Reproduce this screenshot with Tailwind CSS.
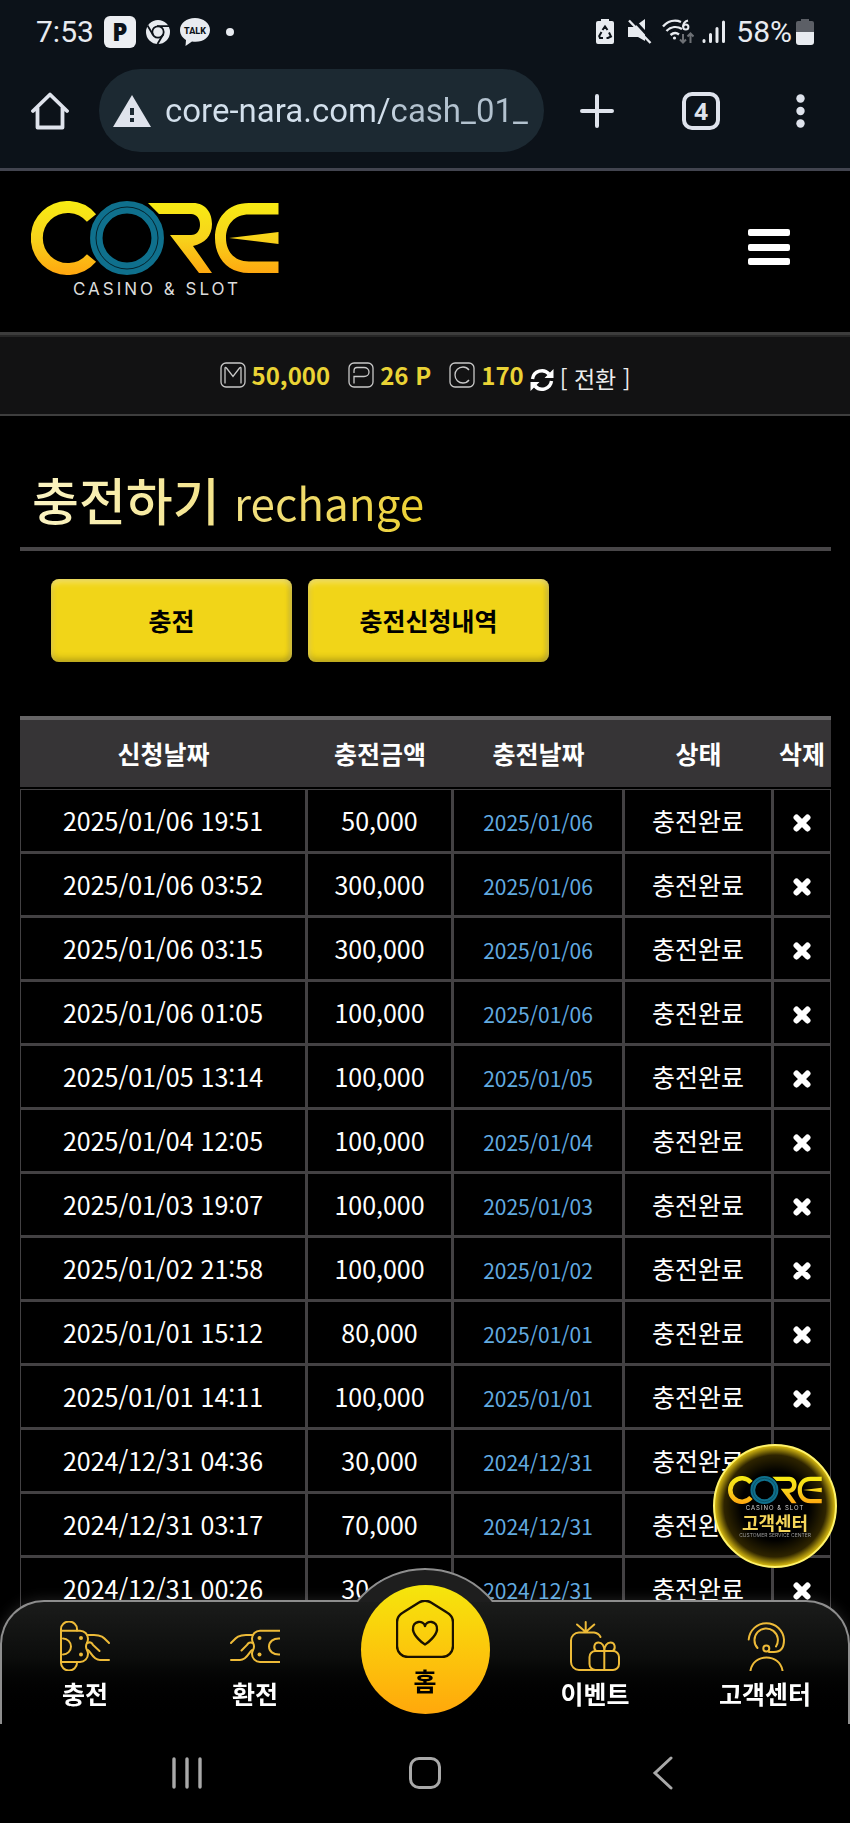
<!DOCTYPE html>
<html lang="ko">
<head>
    <meta charset="UTF-8">
    <meta name="viewport" content="width=device-width, initial-scale=1.0">
    <title>CORE CASINO &amp; SLOT</title>
    <script src="https://cdn.jsdelivr.net/npm/@tailwindcss/browser@4"></script>
</head>
<body class="min-h-screen bg-black text-white font-['Noto_Sans_CJK_KR',sans-serif]">

    <!-- Shared logo -->
    <svg class="absolute size-0" aria-hidden="true">
        <defs>
            <linearGradient id="gold" gradientUnits="userSpaceOnUse" x1="0" y1="0" x2="0" y2="74">
                <stop offset="0" stop-color="#f7ec13"/>
                <stop offset="0.5" stop-color="#f7d31b"/>
                <stop offset="1" stop-color="#ffa60f"/>
            </linearGradient>
            <symbol id="logo" viewBox="0 0 248 74">
                <path d="M60.5 17A31 31 0 1 0 60.5 57" fill="none" stroke="url(#gold)" stroke-width="12"/>
                <circle cx="96" cy="37" r="38" fill="#000"/>
                <circle cx="96" cy="37" r="30.7" fill="none" stroke="#0f708d" stroke-width="12.5"/>
                <circle cx="96" cy="37" r="31" fill="none" stroke="#04222c" stroke-width="1"/>
                <path fill="url(#gold)" d="M117 2H162C175 2 181 12 181 23C181 35 174 42 162 45L181 72H168L139 34H160C166 34 169 29 169 24C169 18 166 13 160 13H128Z"/>
                <path fill="url(#gold)" d="M247.500 2H218C196 2 184 18 184 37C184 56 196 72 218 72H247.500V60.500H218C203 60.500 195 50 195 37C195 24 203 13.500 218 13.500H247.500Z"/>
                <path fill="url(#gold)" d="M198 37L247.500 31V43Z"/>
            </symbol>
        </defs>
    </svg>

    <!-- Phone status bar -->
    <div class="flex h-16 items-center justify-between bg-[#0c1219] pl-9 pr-9 font-[Roboto,sans-serif] text-[30px] leading-8 text-[#e8ebf0]">
        <div class="flex items-center">
            <span>7:53</span>
            <span class="ml-2.5 flex size-8 items-center justify-center rounded-md bg-[#eceef2] font-['Open_Sans',sans-serif] text-2xl font-extrabold text-[#0c1219]">P</span>
            <svg class="ml-2.5 size-6" viewBox="0 0 24 24">
                <circle cx="12" cy="12" r="12" fill="#e8ebf0"/>
                <circle cx="12" cy="12" r="5.700" fill="none" stroke="#0c1219" stroke-width="1.800"/>
                <path d="M11 6.200H23M7 14.800L1.500 5.500M17 14.800L11.500 24" fill="none" stroke="#0c1219" stroke-width="1.800"/>
            </svg>
            <svg class="ml-2.5 h-7 w-[30px]" viewBox="0 0 30 28">
                <path d="M15 0C6.500 0 0 5 0 12C0 17 3 20 6 22L5.500 28L12 23.500C22 25 30 20 30 12C30 5 23.500 0 15 0Z" fill="#e8ebf0"/>
                <text x="15" y="16" text-anchor="middle" font-family="Roboto" font-weight="800" font-size="9" fill="#0c1219">TALK</text>
            </svg>
            <span class="ml-4 size-2 rounded-full bg-[#e8ebf0]"></span>
        </div>
        <div class="flex items-center">
            <svg class="h-[26px] w-[18px]" viewBox="0 0 18 26">
                <path d="M5 0H13V2H16A2 2 0 0 1 18 4V23A2 2 0 0 1 16 25H2A2 2 0 0 1 0 23V4A2 2 0 0 1 2 2H5Z" fill="#e8ebf0"/>
                <path d="M6.500 11L9 7.500L11.500 11M13 13.500L15 17.500L12 19H10.500M7 19H4L3.200 17L5.500 13" fill="none" stroke="#0c1219" stroke-width="2"/>
            </svg>
            <svg class="ml-3.5 h-[26px] w-6" viewBox="0 0 24 26">
                <path d="M0 8H6L17 0V22L10 18H0Z" fill="#e8ebf0"/>
                <path d="M3 -2L24 21" stroke="#0c1219" stroke-width="3"/>
                <path d="M1 1.500L22.500 24" stroke="#e8ebf0" stroke-width="2.400"/>
            </svg>
            <svg class="ml-2.5 h-[26px] w-8" viewBox="0 0 32 26" fill="none" stroke="#e8ebf0" stroke-width="2.400">
                <path d="M1 7.500C6 2 13 .500 19 3M4.500 12C9 7.500 15 7 20 10M8.500 16C11.500 13.500 14.500 13.500 17 15.500"/>
                <circle cx="12.500" cy="19" r="1.600" fill="#e8ebf0" stroke="none"/>
                <path d="M26 1.500C22.500 2.500 21 5 21 8" stroke-width="2"/>
                <circle cx="23.800" cy="8" r="2.600" stroke-width="2"/>
                <path d="M21 15V23M18 20.500L21 23.500L24 20.500M28.500 24V15M25.500 17.500L28.500 14.500L31.500 17.500" stroke="#6d7075" stroke-width="2"/>
            </svg>
            <svg class="ml-2 h-[26px] w-6" viewBox="0 0 24 26" stroke="#e8ebf0" stroke-width="3" stroke-linecap="round">
                <path d="M2 21.500V22.500M8.500 15.500V22.500M15 9.500V22.500M21.500 3V22.500"/>
            </svg>
            <span class="ml-2.5">58%</span>
            <svg class="ml-1 h-[26px] w-[18px]" viewBox="0 0 18 26">
                <path d="M5 0H13V2H16A2 2 0 0 1 18 4V13H0V4A2 2 0 0 1 2 2H5Z" fill="#5c5f66"/>
                <path d="M0 13H18V23A3 3 0 0 1 15 26H3A3 3 0 0 1 0 23Z" fill="#e8ebf0"/>
            </svg>
        </div>
    </div>

    <!-- Browser toolbar -->
    <div class="flex h-[107px] items-start border-b-3 border-[#42444f] bg-[#0c1219] pl-[31px] pr-9 pt-[5px] text-[#dfe3ec]">
        <button aria-label="Home" class="mt-[23px] shrink-0">
            <svg class="size-[38px]" viewBox="0 0 38 38" fill="none" stroke="currentColor" stroke-width="3.800" stroke-linejoin="round" stroke-linecap="round">
                <path d="M2 19L19 2.500L36 19M6.500 16V35.500H31.500V16"/>
            </svg>
        </button>
        <label class="ml-[30px] flex h-[83px] min-w-0 flex-1 items-center rounded-full bg-[#1c2932] pl-3.5 pr-3.5">
            <svg class="h-8 w-[38px] shrink-0" viewBox="0 0 38 32">
                <path d="M19 0L38 32H0Z" fill="#dfe3ec"/>
                <path d="M17 13H21V20H17ZM17 23H21V27H17Z" fill="#1c2932"/>
            </svg>
            <input type="text" aria-label="Address" value="core-nara.com/cash_01_" class="ml-3.5 w-full min-w-0 bg-linear-to-r from-[#d3e0ec] from-60% to-[#b3c2cf] to-65% bg-clip-text font-[Roboto,sans-serif] text-[33px] leading-10 text-transparent outline-none">
        </label>
        <button aria-label="New tab" class="ml-9 mt-[25px] shrink-0">
            <svg class="size-[34px]" viewBox="0 0 34 34" stroke="currentColor" stroke-width="4" stroke-linecap="round"><path d="M2 17H32M17 2V32"/></svg>
        </button>
        <button aria-label="Tabs" class="ml-[68px] mt-[23px] flex size-[38px] shrink-0 items-center justify-center rounded-[10px] border-4 border-current font-['Open_Sans',sans-serif] text-2xl font-bold">4</button>
        <button aria-label="Menu" class="ml-[76px] mt-[25px] shrink-0">
            <svg class="h-[34px] w-[9px]" viewBox="0 0 9 34" fill="currentColor"><circle cx="4.500" cy="4.500" r="4.200"/><circle cx="4.500" cy="17" r="4.200"/><circle cx="4.500" cy="29.500" r="4.200"/></svg>
        </button>
        <span class="w-[9px]"></span>
    </div>

    <!-- Site header -->
    <header class="flex h-[164px] justify-between border-b-3 border-[#3c3c3c] pl-[31px] pr-[60px] pt-[30px]">
        <a href="#" class="block h-[94px] w-[248px]">
            <svg class="h-[74px] w-[248px]"><use href="#logo"/></svg>
            <span class="mt-1 block pl-1 text-center font-[Inter,sans-serif] text-[17px] leading-5 tracking-[3px] text-[#dcdcdc]">CASINO &amp; SLOT</span>
        </a>
        <button aria-label="메뉴" class="mt-7 flex h-9 w-[42px] flex-col justify-between">
            <span class="h-[7px] w-full rounded-xs bg-white"></span>
            <span class="h-[7px] w-full rounded-xs bg-white"></span>
            <span class="h-[7px] w-full rounded-xs bg-white"></span>
        </button>
    </header>

    <!-- Balances -->
    <div class="flex h-[81px] items-center justify-center border-y-2 border-t-[#262626] border-b-[#3e3e3e] bg-[#121213] pb-0.5 text-2xl leading-8 font-bold text-[#ead335]">
        <svg class="mr-1.5 size-[26px]" viewBox="0 0 26 26" fill="none" stroke="#c9c9c9" stroke-width="1.300"><rect x="1" y="1" width="24" height="24" rx="5"/><path d="M5 21.500V6.500Q5 4.500 6.500 6L13 14.500L19.500 6Q21 4.500 21 6.500V21.500"/></svg>
        <span>50,000</span>
        <svg class="mr-1.5 ml-[18px] size-[26px]" viewBox="0 0 26 26" fill="none" stroke="#c9c9c9" stroke-width="1.300"><rect x="1" y="1" width="24" height="24" rx="5"/><path d="M6 21.500V14.500H16A5 4.500 0 0 0 16 5.500H9Q6 5.500 6 9V11"/></svg>
        <span>26 P</span>
        <svg class="mr-1.5 ml-[18px] size-[26px]" viewBox="0 0 26 26" fill="none" stroke="#c9c9c9" stroke-width="1.300"><rect x="1" y="1" width="24" height="24" rx="5"/><path d="M20 8C18.500 6 16.500 5 14 5C9.500 5 6 8.500 6 13S9.500 21 14 21C16.500 21 18.500 20 20 18"/></svg>
        <span>170</span>
        <button class="mt-1.5 ml-1.5 flex items-center gap-1.5 text-[23px] font-normal text-[#ededed]">
            <svg class="mt-1 size-6" viewBox="0 0 24 24" fill="none" stroke="#fff" stroke-width="3.400"><path d="M2.500 11A9.500 9.500 0 0 1 19 6M21.500 13A9.500 9.500 0 0 1 5 18"/><path d="M23.500 1V10H14.500ZM.500 23V14H9.500Z" fill="#fff" stroke="none"/></svg>
            [ 전환 ]
        </button>
    </div>

    <main class="px-5 pt-12 pr-[19px]">
        <h1 class="h-[87px] border-b-4 border-[#484648] pl-3 leading-[70px]">
            <span class="bg-linear-to-r from-[#fbf4c4] to-[#ecd02c] bg-clip-text text-[51px] font-medium text-transparent">충전하기 <span class="text-[44px] font-normal">rechange</span></span>
        </h1>

        <div class="mt-7 flex gap-4 pl-[31px]">
            <button class="h-[83px] w-[241px] rounded-lg bg-[#f1d518] text-[25px] font-bold text-black shadow-[inset_0_3px_6px_#fff6,inset_0_-4px_6px_#0003,inset_-3px_0_5px_#0002]">충전</button>
            <button class="h-[83px] w-[241px] rounded-lg bg-[#f1d518] text-[25px] font-bold text-black shadow-[inset_0_3px_6px_#fff6,inset_0_-4px_6px_#0003,inset_-3px_0_5px_#0002]">충전신청내역</button>
        </div>

        <table class="mt-[54px] w-full table-fixed border-separate border-spacing-0 text-center text-[25px] leading-8">
            <colgroup>
                <col class="w-[287px]">
                <col class="w-[146px]">
                <col class="w-[171px]">
                <col class="w-[149px]">
                <col class="w-[58px]">
            </colgroup>
            <thead>
                <tr class="h-[73px] font-bold">
                    <th class="border-t-4 border-b-2 border-t-[#666566] border-b-black bg-[#363436] pb-0.5">신청날짜</th>
                    <th class="border-t-4 border-b-2 border-t-[#666566] border-b-black bg-[#363436] pb-0.5">충전금액</th>
                    <th class="border-t-4 border-b-2 border-t-[#666566] border-b-black bg-[#363436] pb-0.5">충전날짜</th>
                    <th class="border-t-4 border-b-2 border-t-[#666566] border-b-black bg-[#363436] pb-0.5">상태</th>
                    <th class="border-t-4 border-b-2 border-t-[#666566] border-b-black bg-[#363436] pb-0.5">삭제</th>
                </tr>
            </thead>
            <tbody id="history"></tbody>
        </table>
    </main>

    <!-- Floating support badge -->
    <a href="#" class="fixed right-[13px] bottom-[255px] z-10 flex size-[124px] flex-col items-center rounded-full border-2 border-[#fff36b] bg-[radial-gradient(circle,#000_40%,#2e2400_60%,#d9bb10_71%)] pt-[30px]">
        <svg class="h-7 w-24"><use href="#logo"/></svg>
        <span class="font-[Inter,sans-serif] text-[6px] leading-2 tracking-[1px] text-[#d0d0d0]">CASINO &amp; SLOT</span>
        <span class="text-lg leading-5 font-bold text-[#f5d65a]">고객센터</span>
        <span class="font-[Inter,sans-serif] text-[5px] leading-1.5 text-[#9a9a9a]">CUSTOMER SERVICE CENTER</span>
    </a>

    <!-- Bottom bars -->
    <footer class="fixed inset-x-0 bottom-0">
        <nav class="relative h-[124px] rounded-t-[44px] border-2 border-b-0 border-[#8e8e8e] bg-linear-to-b from-[#1b1c1b] via-[#0c0d0c] via-45% to-black shadow-[0_0_14px_#fff2]">
            <!-- raised arc around the home button -->
            <div class="absolute -top-[34px] left-1/2 h-[34px] w-[138px] -translate-x-1/2 overflow-hidden">
                <div class="absolute left-1/2 size-[176px] -translate-x-1/2 rounded-full border-2 border-[#8e8e8e] bg-[#1e1e1e]"></div>
            </div>
            <div class="-mx-0.5 grid grid-cols-5 text-[25px] leading-8 font-bold">
                <a href="#" class="flex flex-col items-center gap-1.5 pt-[19px]">
                    <svg class="size-[50px]" viewBox="0 0 50 50" fill="none" stroke="#eebb38" stroke-width="2" stroke-linecap="round">
                        <path d="M1 42V8A8 7.500 0 0 1 17 8V9.500M1 42A8 7.500 0 0 0 17 42V41"/>
                        <path d="M1 9.700H20A8 8 0 0 1 28 17.700C28 22 26 22 26 25.500S28 29 28 33A8 8 0 0 1 20 41H1"/>
                        <path d="M3 17.500A8 8 0 0 1 3 33.500M27 14H34C42 14 44 17 49 22M27 22C30 20.500 32 22 33 24L39.500 30M28 29C31 31 33 39 40 39H49"/>
                        <circle cx="21" cy="17" r="2" fill="#eebb38" stroke="none"/><circle cx="21" cy="33.500" r="2" fill="#eebb38" stroke="none"/>
                    </svg>
                    충전
                </a>
                <a href="#" class="flex flex-col items-center gap-1.5 pt-[19px]">
                    <svg class="size-[50px]" viewBox="0 0 50 50" fill="none" stroke="#eebb38" stroke-width="2" stroke-linecap="round">
                        <path d="M50 9.700H30A8 8 0 0 0 22 17.700C22 22 24 22 24 25.500S22 29 22 33A8 8 0 0 0 30 41H50"/>
                        <path d="M50 17.500C43 17 39 21 39 25.500S43 34 50 33.500M23 14H16C8 14 6 17 1 22M23 22C20 20.500 18 22 17 24L11.500 29.500M22 29C19 31 17 39 10 39H1"/>
                        <circle cx="29.500" cy="17" r="2" fill="#eebb38" stroke="none"/><circle cx="29.500" cy="33.500" r="2" fill="#eebb38" stroke="none"/>
                    </svg>
                    환전
                </a>
                <a href="#" class="relative -mt-[17px] flex size-[129px] flex-col items-center justify-self-center rounded-full bg-linear-to-b from-[#f5e60c] to-[#ffa80b] pt-[15px] text-black">
                    <svg class="size-[58px]" viewBox="0 0 58 58" fill="none" stroke="#1a1200" stroke-width="2.400" stroke-linecap="round">
                        <path d="M23 2.500Q29 -1 35 2.500L51 12.500Q57 16 57 22V46A11 11 0 0 1 46 57H12A11 11 0 0 1 1 46V22Q1 16 7 12.500Z"/>
                        <path d="M29 26C28 20 16 20 17 30C18 36 26 43 29 44.500C32 43 40 36 41 30C42 20 30 20 29 26"/>
                    </svg>
                    <span class="mt-1.5">홈</span>
                </a>
                <a href="#" class="flex flex-col items-center gap-1.5 pt-[19px]">
                    <svg class="size-[50px]" viewBox="0 0 50 50" fill="none" stroke="#eebb38" stroke-width="2" stroke-linecap="round">
                        <path d="M30.500 16A8 8 0 0 0 24 11.500H9A8 8 0 0 0 1 19.500V41A8 8 0 0 0 9 49H25M15.700 11.500V1M15.700 11L7 3.500M15.700 11L24.300 3.500"/>
                        <rect x="19.500" y="30" width="29.500" height="19" rx="6"/>
                        <path d="M34.300 49V30C34.300 25 32 21.500 28.500 21.500C24 21.500 23 27 26 30M34.300 30C34.300 25 37 21.500 40.500 21.500C45 21.500 46 27 43 30"/>
                    </svg>
                    이벤트
                </a>
                <a href="#" class="flex flex-col items-center gap-1.5 pt-[19px]">
                    <svg class="size-[50px]" viewBox="0 0 50 50" fill="none" stroke="#eebb38" stroke-width="2" stroke-linecap="round">
                        <path d="M8.700 18.500A17.700 17.700 0 0 1 44 18.700C44 27 40 31 34 31H29"/>
                        <path d="M17.500 27A11.700 11.700 0 1 1 36 25.500M10.500 49.500C12 41 19 36.500 26.500 36.500S41 41 42.500 49.500"/>
                        <circle cx="26.300" cy="27.500" r="3"/>
                    </svg>
                    고객센터
                </a>
            </div>
        </nav>
        <!-- Android navigation -->
        <div class="relative flex h-[99px] items-center justify-between bg-black px-[170px] pb-0.5 text-[#a9a9a9]">
            <button aria-label="Recents">
                <svg class="size-[34px]" viewBox="0 0 34 34" stroke="currentColor" stroke-width="3.400" stroke-linecap="round"><path d="M4 3V31M17 3V31M30 3V31"/></svg>
            </button>
            <button aria-label="Home" class="size-8 rounded-[10px] border-3 border-current"></button>
            <button aria-label="Back">
                <svg class="size-[34px]" viewBox="0 0 34 34" fill="none" stroke="currentColor" stroke-width="3" stroke-linecap="round"><path d="M25 2L9 17L25 32"/></svg>
            </button>
        </div>
    </footer>

    <script>
        const rows = [
            ['2025/01/06 19:51', '50,000'],
            ['2025/01/06 03:52', '300,000'],
            ['2025/01/06 03:15', '300,000'],
            ['2025/01/06 01:05', '100,000'],
            ['2025/01/05 13:14', '100,000'],
            ['2025/01/04 12:05', '100,000'],
            ['2025/01/03 19:07', '100,000'],
            ['2025/01/02 21:58', '100,000'],
            ['2025/01/01 15:12', '80,000'],
            ['2025/01/01 14:11', '100,000'],
            ['2024/12/31 04:36', '30,000'],
            ['2024/12/31 03:17', '70,000'],
            ['2024/12/31 00:26', '30,000'],
        ];

        document.getElementById('history').innerHTML = rows.map(([date, amount]) => `
            <tr class="h-16">
                <td class="border border-r-2 border-b-2 border-[#434143] pb-0.5">${date}</td>
                <td class="border border-r-2 border-b-2 border-[#434143] pb-0.5">${amount}</td>
                <td class="border border-r-2 border-b-2 border-[#434143] pt-0.5 text-[21px] text-[#62abe0]">${date.split(' ')[0]}</td>
                <td class="border border-r-2 border-b-2 border-[#434143] pb-0.5">충전완료</td>
                <td class="border border-b-2 border-[#434143]">
                    <button aria-label="삭제" class="block mx-auto mt-1">
                        <svg class="size-[18px]" viewBox="0 0 18 18" stroke="#fff" stroke-width="6" stroke-linecap="round"><path d="M3.500 3.500L14.500 14.500M14.500 3.500L3.500 14.500"/></svg>
                    </button>
                </td>
            </tr>
        `).join('');
    </script>
</body>
</html>
